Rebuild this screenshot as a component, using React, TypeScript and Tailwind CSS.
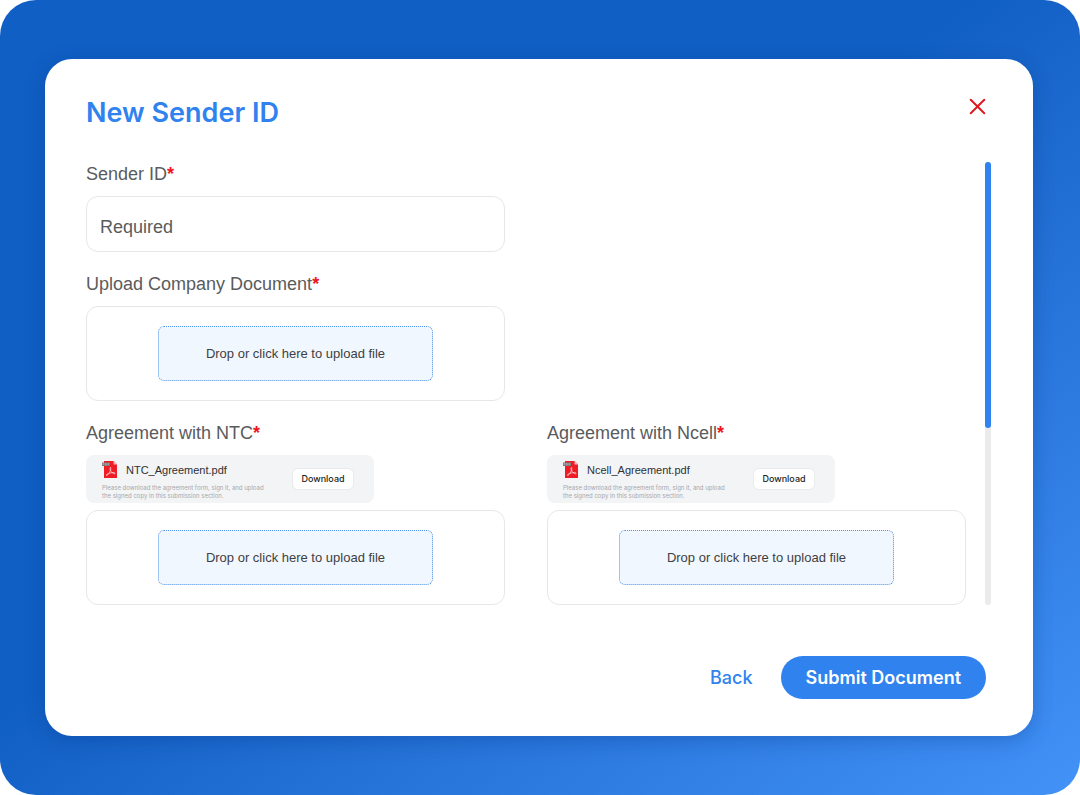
import { useState } from "react";
import { X } from "lucide-react";

interface Agreement {
  id: string;
  title: string;
  file: string;
}

const agreements: Agreement[] = [
  { id: "ntc", title: "Agreement with NTC", file: "NTC_Agreement.pdf" },
  { id: "ncell", title: "Agreement with Ncell", file: "Ncell_Agreement.pdf" },
];

function FieldLabel({ htmlFor, text }: { htmlFor: string; text: string }) {
  return (
    <label htmlFor={htmlFor} className="mb-[9px] block text-lg leading-[25px] text-[#5a5b5d]">
      {text}
      <span className="font-bold text-[#f0141e]">*</span>
    </label>
  );
}

function DropZone({ id }: { id: string }) {
  return (
    <div className="flex h-[95px] items-center justify-center rounded-xl border border-[#e6e7e8]">
      <label
        htmlFor={id}
        className="relative flex h-[55px] w-[66%] cursor-pointer items-center justify-center rounded-md border border-dotted border-[#4a90e8] bg-[#f1f7fe] text-[13px] text-[#3f4042]"
      >
        Drop or click here to upload file
        <input id={id} type="file" className="sr-only" />
      </label>
    </div>
  );
}

function PdfIcon() {
  return (
    <svg viewBox="0 0 16 19" className="h-[19px] w-4 shrink-0" aria-hidden="true">
      <path d="M2 1h9.500L15 4.500V18H2z" fill="#ee1c25" />
      <path d="M11.500 1v3.500H15z" fill="#f9b4b7" />
      <rect x="0" y="2.500" width="8" height="3.500" fill="#7d7476" />
      <path d="M1 5.300V3.300h1v1H1M3.500 3.300v2h.6q.8-1 0-2zM6 5.300v-2h1.200M6 4.300h1" fill="none" stroke="#d8d2d3" strokeWidth=".4" />
      <path
        d="M8.500 7.500c-.9 0-.6 1.500 0 2.700.9 1.900 2.500 3.600 3.900 3.600 1 0 .9-1.100-.5-1.200-2.500-.1-5 .6-6.700 1.500-1.300.7-1 1.600-.2 1.300 1.300-.5 3-3.700 3.600-5.700.3-1.100.5-2.200-.1-2.200z"
        fill="none"
        stroke="#fff"
        strokeWidth=".6"
      />
    </svg>
  );
}

function AgreementFile({ file }: { file: string }) {
  return (
    <div className="mb-[7px] flex h-12 w-72 items-center justify-between rounded-lg bg-[#f3f4f6] pr-5 pl-4">
      <div>
        <div className="flex items-center gap-2">
          <PdfIcon />
          <span className="pt-[2px] text-[11px] leading-5 text-[#2f3032]">{file}</span>
        </div>
        <p className="mt-1 font-['Inter',sans-serif] text-[6px] leading-2 text-[#a6a8ab]">
          Please download the agreement form, sign it, and upload
          <br />
          the signed copy in this submission section.
        </p>
      </div>
      <button
        type="button"
        className="h-[22px] w-[62px] rounded-md border border-[#e9eaec] bg-white font-['Inter',sans-serif] text-[9px] font-medium text-[#1d1e20]"
      >
        Download
      </button>
    </div>
  );
}

export default function App() {
  const [senderId, setSenderId] = useState("");

  return (
    <div className="min-h-screen bg-white font-['Liberation_Sans',Arial,sans-serif]">
      <div className="min-h-screen rounded-[36px] bg-linear-to-br from-[#105fc4] from-45% to-[#4292f8] py-[59px] pr-[47px] pl-[45px]">
        <form
          role="dialog"
          aria-labelledby="dialog-title"
          onSubmit={(e) => e.preventDefault()}
          className="rounded-[27px] bg-white pt-[34px] pr-[42px] pb-[37px] pl-[41px] shadow-[0_5px_20px_rgba(0,50,130,0.3)]"
        >
          <header className="mb-[29px] flex items-start justify-between">
            <h1
              id="dialog-title"
              className="font-['Inter',sans-serif] text-[27px] leading-10 font-semibold text-[#3083ee]"
            >
              New Sender ID
            </h1>
            <button type="button" aria-label="Close" className="text-[#e0161f]">
              <X size={27} strokeWidth={1.75} />
            </button>
          </header>

          <div className="flex gap-[19px]">
            <div className="grid flex-1 grid-cols-2 gap-x-[42px] gap-y-5">
              <div className="col-start-1">
                <FieldLabel htmlFor="sender-id" text="Sender ID" />
                <input
                  id="sender-id"
                  type="text"
                  required
                  placeholder="Required"
                  value={senderId}
                  onChange={(e) => setSenderId(e.target.value)}
                  className="block h-14 w-full rounded-xl border border-[#e6e7e8] px-[13px] pt-[6px] text-lg text-[#5a5b5d] outline-none placeholder:text-[#5a5b5d]"
                />
              </div>
              <div className="col-start-1">
                <FieldLabel htmlFor="company-document" text="Upload Company Document" />
                <DropZone id="company-document" />
              </div>
              {agreements.map((a) => (
                <div key={a.id} className={a.id === "ntc" ? "col-start-1" : ""}>
                  <FieldLabel htmlFor={a.id} text={a.title} />
                  <AgreementFile file={a.file} />
                  <DropZone id={a.id} />
                </div>
              ))}
            </div>
            {/* scroll rail */}
            <div className="w-[6px] rounded-full bg-[#ebebeb]">
              <div className="h-3/5 rounded-full bg-[#3083ee]" />
            </div>
          </div>

          <footer className="mt-[51px] flex items-center justify-end gap-7 pr-[5px] font-['Inter',sans-serif]">
            <button type="button" className="text-lg font-medium text-[#3083ee]">
              Back
            </button>
            <button type="submit" className="h-[43px] rounded-full bg-[#3083ee] px-[25px] text-lg font-semibold text-white">
              Submit Document
            </button>
          </footer>
        </form>
      </div>
    </div>
  );
}
